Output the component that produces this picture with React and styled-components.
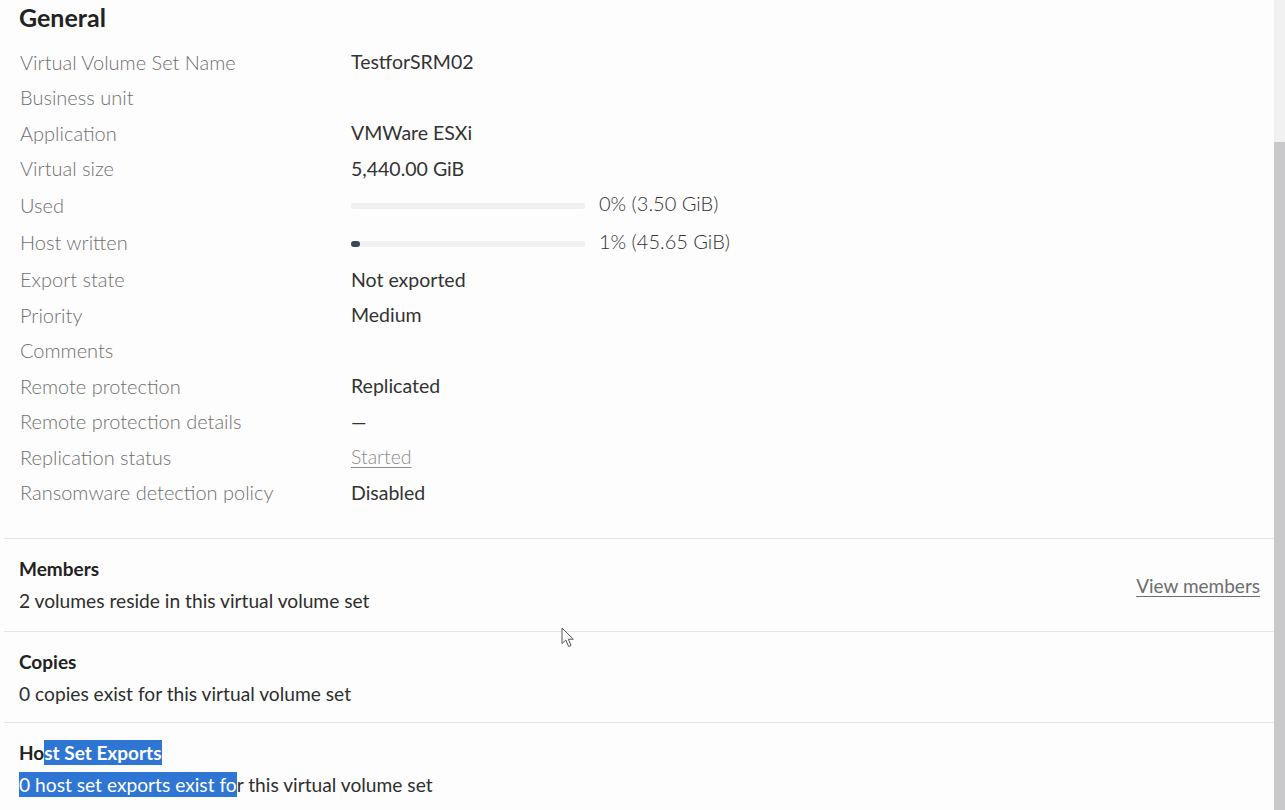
import React from "react";
import styled, { createGlobalStyle } from "styled-components";

const Global = createGlobalStyle`
  html, body { margin: 0; padding: 0; background: #ffffff; }
  body { font-family: Lato, "Noto Sans", sans-serif; -webkit-font-smoothing: antialiased; }
`;

const Frame = styled.div`
  width: 1285px;
  height: 810px;
  display: flex;
  overflow: hidden;
  background: #fdfdfd;
  position: relative;
`;

const Content = styled.div`
  flex: 1;
  padding-left: 4px;
  display: flex;
  flex-direction: column;
`;

const Scrollbar = styled.div`
  width: 11px;
  display: flex;
  flex-direction: column;
  background: #f1f1f1;
`;

const ScrollThumb = styled.div`
  margin-top: 142px;
  flex: 1;
  background: #c9c8cb;
`;

const General = styled.section`
  padding: 0 15px 28px;
  border-bottom: 1px solid #e5e5e5;
`;

const Heading = styled.h2`
  margin: 0;
  height: 44px;
  line-height: 34px;
  font-size: 25px;
  font-weight: 700;
  color: #222;
`;

const Fields = styled.div`
  display: grid;
  grid-template-columns: 332px 1fr;
`;

const Label = styled.div`
  height: ${(p) => p.$h}px;
  display: flex;
  align-items: center;
  font-size: 20px;
  font-weight: 300;
  color: #707070;
  padding-left: 1px;
`;

const Value = styled.div`
  height: ${(p) => p.$h}px;
  display: flex;
  align-items: center;
  font-size: 19.5px;
  font-weight: 400;
  color: #333;
`;

const LinkText = styled.span`
  color: #8a8a8a;
  font-weight: 300;
  text-decoration: underline;
  text-underline-offset: 3px;
  text-decoration-thickness: 1px;
`;

const Meter = styled.div`
  display: flex;
  align-items: center;
  gap: 14px;
`;

const Track = styled.div`
  width: 234px;
  height: 6px;
  border-radius: 3px;
  background: #f0f0f0;
  display: flex;
  margin-top: 3px;
`;

const Fill = styled.div`
  height: 100%;
  border-radius: 3px;
  background: #3b4656;
`;

const MeterText = styled.span`
  font-size: 20px;
  font-weight: 300;
  color: #333;
  margin-top: -3px;
`;

const Panel = styled.section`
  padding: 18px 14px ${(p) => p.$pb ?? 18}px 15px;
  border-bottom: ${(p) => (p.$last ? "none" : "1px solid #e5e5e5")};
  display: flex;
  align-items: center;
  justify-content: space-between;
`;

const PanelText = styled.div`
  display: flex;
  flex-direction: column;
  gap: 8px;
`;

const PanelTitle = styled.div`
  font-size: 19px;
  font-weight: 700;
  line-height: 24px;
  color: #222;
`;

const PanelBody = styled.div`
  font-size: 19.2px;
  font-weight: 400;
  line-height: 24px;
  color: #2e2e2e;
`;

const Selected = styled.span`
  background: #2f75d4;
  color: #ffffff;
  padding: 1px 0;
`;

const ViewLink = styled.a`
  font-size: 19px;
  color: #6e6e6e;
  text-decoration: underline;
  text-underline-offset: 3px;
  cursor: pointer;
`;

const Pointer = styled.svg`
  position: absolute;
  left: 561px;
  top: 627px;
  pointer-events: none;
`;

const rows = [
  ["Virtual Volume Set Name", "TestforSRM02"],
  ["Business unit", ""],
  ["Application", "VMWare ESXi"],
  ["Virtual size", "5,440.00 GiB"],
  ["Used", { pct: 0, text: "0% (3.50 GiB)" }, 37],
  ["Host written", { pct: 1, text: "1% (45.65 GiB)" }, 38.5],
  ["Export state", "Not exported"],
  ["Priority", "Medium"],
  ["Comments", ""],
  ["Remote protection", "Replicated"],
  ["Remote protection details", "—"],
  ["Replication status", { link: "Started" }],
  ["Ransomware detection policy", "Disabled"],
];

function renderValue(v) {
  if (v && typeof v === "object" && "pct" in v) {
    return (
      <Meter>
        <Track>
          {v.pct > 0 && <Fill style={{ width: `${Math.max(9, v.pct * 2.34)}px` }} />}
        </Track>
        <MeterText>{v.text}</MeterText>
      </Meter>
    );
  }
  if (v && typeof v === "object" && "link" in v) {
    return <LinkText>{v.link}</LinkText>;
  }
  return v;
}

export default function App() {
  return (
    <>
      <Global />
      <Frame>
        <Content>
          <General>
            <Heading>General</Heading>
            <Fields>
              {rows.map(([label, value, h = 35.5]) => (
                <React.Fragment key={label}>
                  <Label $h={h}>{label}</Label>
                  <Value $h={h}>{renderValue(value)}</Value>
                </React.Fragment>
              ))}
            </Fields>
          </General>
          <Panel>
            <PanelText>
              <PanelTitle>Members</PanelTitle>
              <PanelBody>2 volumes reside in this virtual volume set</PanelBody>
            </PanelText>
            <ViewLink>View members</ViewLink>
          </Panel>
          <Panel $pb={16}>
            <PanelText>
              <PanelTitle>Copies</PanelTitle>
              <PanelBody>0 copies exist for this virtual volume set</PanelBody>
            </PanelText>
          </Panel>
          <Panel $last>
            <PanelText>
              <PanelTitle>
                Ho<Selected>st Set Exports</Selected>
              </PanelTitle>
              <PanelBody>
                <Selected>0 host set exports exist fo</Selected>r this virtual volume set
              </PanelBody>
            </PanelText>
          </Panel>
        </Content>
        <Scrollbar>
          <ScrollThumb />
        </Scrollbar>
        <Pointer width="16" height="22" viewBox="0 0 16 22">
          <path
            d="M1 1 L1 16.5 L4.8 13 L7.6 19.5 L10 18.4 L7.3 12.2 L12.3 12.2 Z"
            fill="#ffffff"
            stroke="#555"
            strokeWidth="1"
            strokeLinejoin="round"
          />
        </Pointer>
      </Frame>
    </>
  );
}
